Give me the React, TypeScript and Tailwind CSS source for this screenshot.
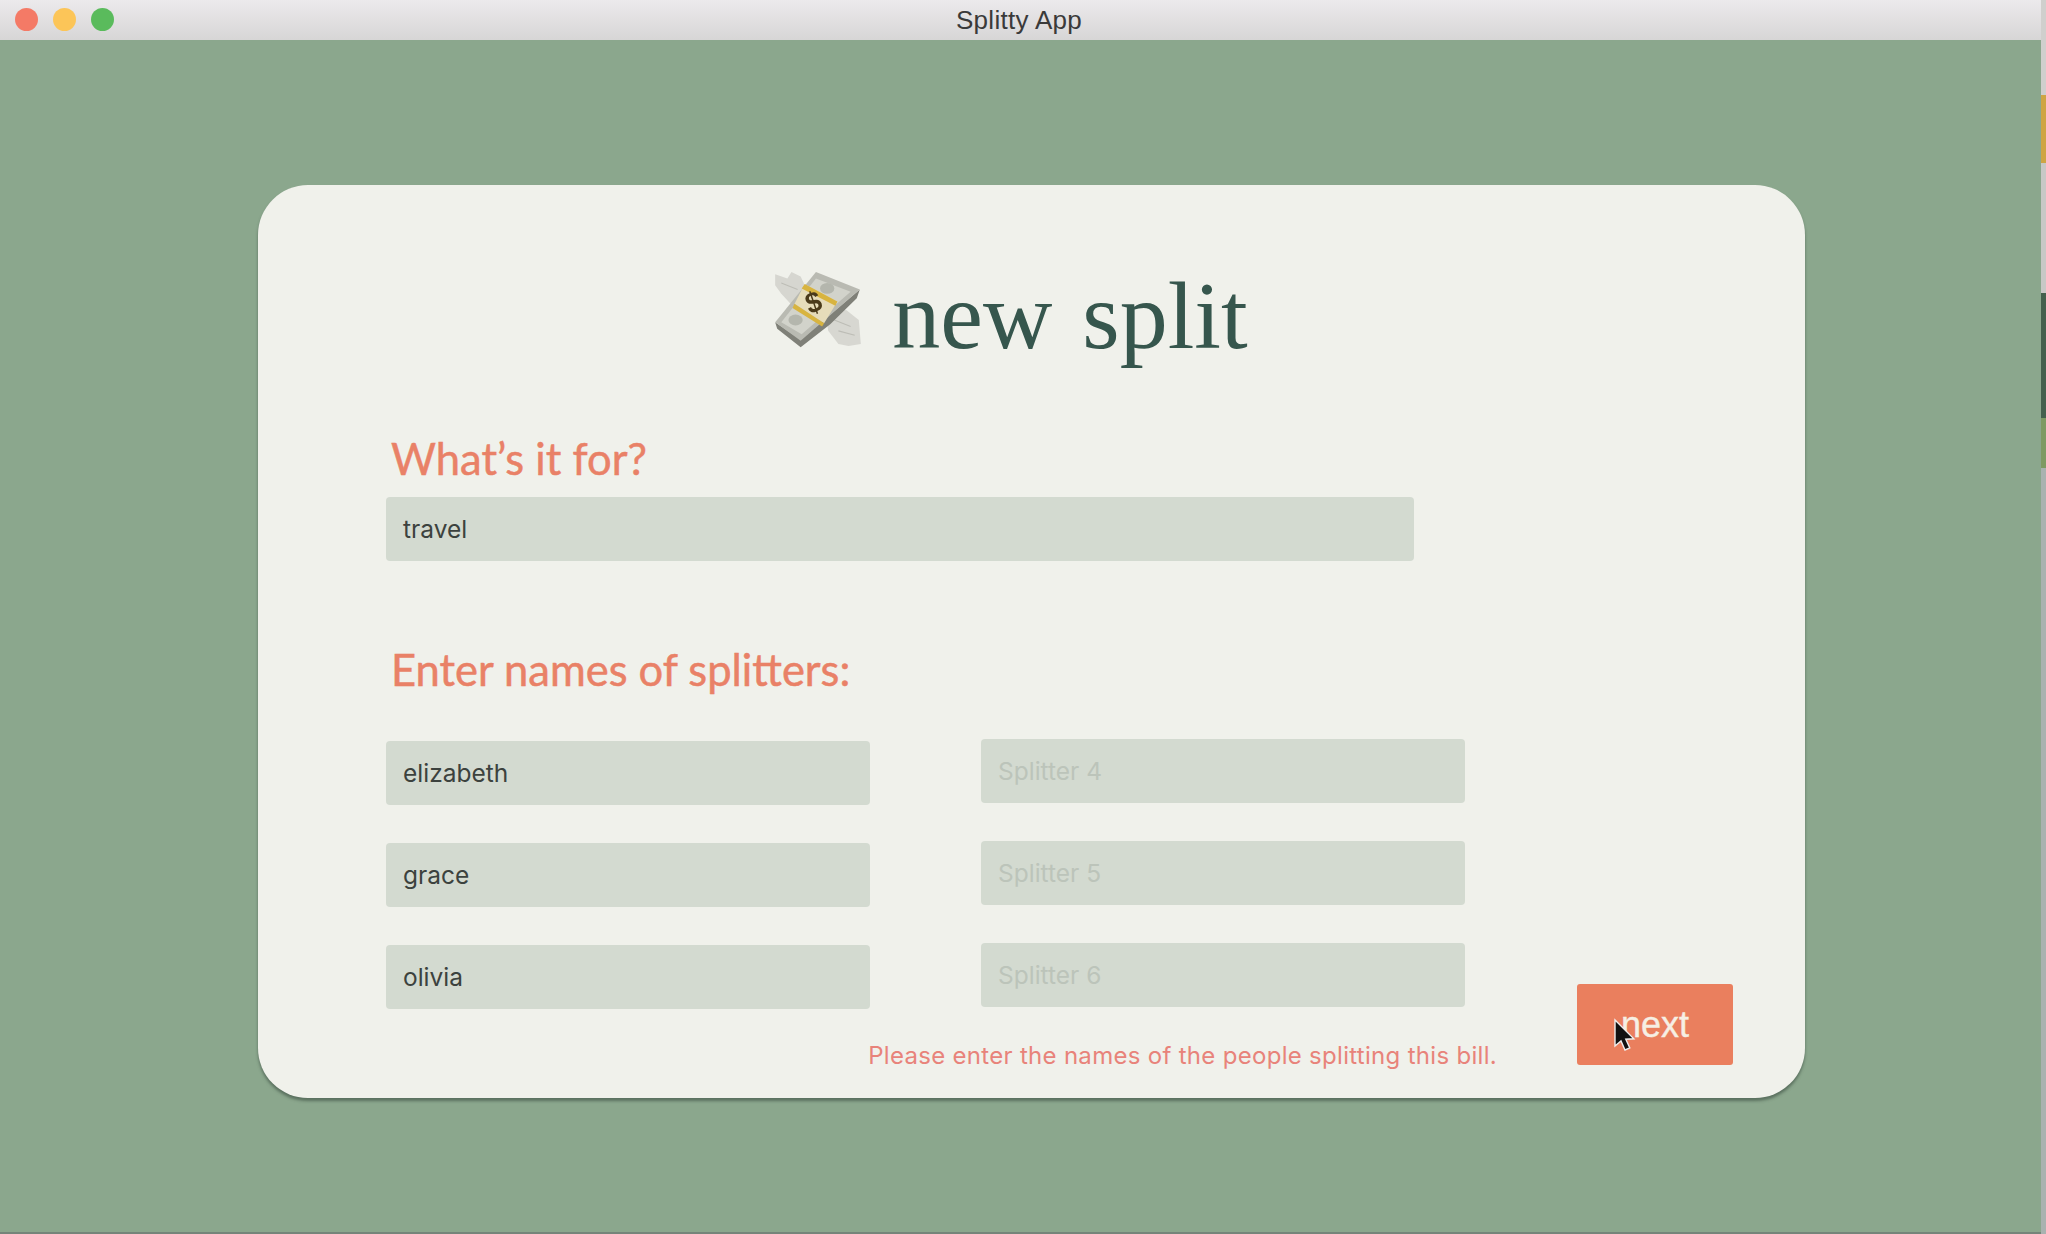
const labelFont = "font-['Lato','Liberation_Sans',sans-serif]"

function MoneyWings() {
  return (
    <svg width="102" height="98" viewBox="0 0 100 90" preserveAspectRatio="none" className="mr-[23px] mt-[-4px] blur-[0.5px]">
      {/* wings */}
      <path d="M8 14 L20 18 L24 12 L33 16 L36 22 L38 32 L24 42 L14 32 L8 24 Z" fill="#d6d6d0" />
      <path d="M58 54 L68 46 L78 47 L90 56 L92 78 L80 80 L70 78 L60 66 Z" fill="#d7d7d1" />
      <path d="M66 56 L82 62 M70 66 L86 70 M14 22 L30 28" stroke="#bdbdb6" strokeWidth="1" />
      {/* stack */}
      <path d="M8 58 L10 64 L33 81 L62 60 L88 36 L91 28 L33 74 Z" fill="#7f8078" />
      <path d="M8 58 L48 12 L91 28 L33 75 Z" fill="#b9bab2" />
      <path d="M14 58 L48 18 L82 30 L34 69 Z" fill="#d2d3cb" />
      <ellipse cx="59" cy="27" rx="7" ry="5" fill="#b4b6ad" />
      <ellipse cx="28" cy="56" rx="7" ry="5" fill="#b4b6ad" />
      {/* band */}
      <path d="M37 23 L69 39 L56 59 L27 41 Z" fill="#e6dcba" />
      <path d="M37 23 L69 39 L67 43 L34 27 Z M27 41 L56 59 L54 62 L25 45 Z" fill="#d8b440" />
      <text
        x="46"
        y="49"
        textAnchor="middle"
        fontSize="27"
        fontWeight="700"
        fill="#4a3a1a"
        fontFamily="Liberation Sans"
        transform="rotate(-20 46 41)"
      >
        $
      </text>
    </svg>
  )
}

function Field({ value, placeholder, full }: { value?: string; placeholder?: string; full?: boolean }) {
  return (
    <div
      className={`h-[64px] ${full ? 'w-[1028px]' : 'w-[484px]'} bg-[#d3dad0] rounded-[4px] pl-[17px] flex items-center text-[24.5px] font-['Inter',sans-serif] ${
        value ? 'text-[#3c423e]' : 'text-[#bcc4ba]'
      }`}
    >
      {value ?? placeholder}
    </div>
  )
}

export default function App() {
  return (
    <div className="w-[2046px] h-[1234px] flex overflow-hidden bg-[#c9c9c6]">
      <div className="w-[2041px] h-full flex flex-col">
        {/* title bar */}
        <div className="h-[40px] shrink-0 relative flex items-center justify-center bg-gradient-to-b from-[#eceaec] to-[#d7d6d6]">
          <div className="absolute left-[15px] top-[8px] flex gap-[15px]">
            <div className="w-[23px] h-[23px] rounded-full bg-[#f47a66]" />
            <div className="w-[23px] h-[23px] rounded-full bg-[#fcc558]" />
            <div className="w-[23px] h-[23px] rounded-full bg-[#5abb5c]" />
          </div>
          <span className="text-[26px] tracking-[0.3px] text-[#3a3a3a] font-['Liberation_Sans',sans-serif] pr-[3px]">Splitty App</span>
        </div>

        {/* main */}
        <div className="flex-1 bg-[#8ba78d] pt-[145px] pl-[258px] border-b-2 border-[#75857a]">
          <div className="w-[1547px] h-[913px] bg-[#f0f1eb] rounded-[50px] shadow-[0_3px_3px_rgba(70,90,75,0.7)]">
            <div className="pt-[78px] h-[247px] flex justify-center items-start pr-[48px]">
              <MoneyWings />
              <h1 className="mt-[-2px] text-[96px] leading-[110px] text-[#36564d] font-['Liberation_Serif',serif] [word-spacing:6px]">
                new split
              </h1>
            </div>

            <div className="pl-[128px]">
              <h2 className={`ml-[5px] h-[52px] leading-[52px] text-[43.5px] text-[#e98167] [-webkit-text-stroke:0.5px_#e98167] ${labelFont}`}>
                What’s it for?
              </h2>
              <div className="mt-[13px]">
                <Field value="travel" full />
              </div>
              <h2 className={`ml-[5px] mt-[82px] h-[52px] leading-[52px] text-[43.5px] text-[#e98167] [-webkit-text-stroke:0.5px_#e98167] ${labelFont}`}>
                Enter names of splitters:
              </h2>

              <div className="flex mt-[44px]">
                <div className="w-[1111px]">
                  <div className="flex gap-[111px] items-start">
                    <div className="flex flex-col gap-[38px] pt-[2px]">
                      <Field value="elizabeth" />
                      <Field value="grace" />
                      <Field value="olivia" />
                    </div>
                    <div className="flex flex-col gap-[38px]">
                      <Field placeholder="Splitter 4" />
                      <Field placeholder="Splitter 5" />
                      <Field placeholder="Splitter 6" />
                    </div>
                  </div>
                  <p className="mt-[31px] h-[32px] leading-[32px] text-right text-[24px] tracking-[0.3px] text-[#e8837a] font-['Inter',sans-serif]">
                    Please enter the names of the people splitting this bill.
                  </p>
                </div>

                <button className="relative self-end ml-[80px] mb-[7px] w-[156px] h-[81px] bg-[#ea7f5e] rounded-[3px] text-[36px] text-[#f6efe4] [-webkit-text-stroke:0.4px_#f6efe4] font-['Liberation_Sans',sans-serif]">
                  next
                  <svg width="24" height="34" viewBox="0 0 12 17" className="absolute left-[36px] top-[34px]">
                    <path d="M1 1 L1 14 L4 11.5 L6 16 L8.4 15 L6.4 10.6 L10.4 10.4 Z" fill="#111" stroke="#eee" strokeWidth="0.7" />
                  </svg>
                </button>
              </div>
            </div>
          </div>
        </div>
      </div>

      {/* desktop showing behind the window */}
      <div className="w-[5px] h-full flex flex-col">
        <div className="h-[95px] bg-[#d0cfcd]" />
        <div className="h-[68px] bg-[#cfa544]" />
        <div className="h-[130px] bg-[#c8c8c6]" />
        <div className="h-[125px] bg-[#44604d]" />
        <div className="h-[50px] bg-[#7f9a63]" />
        <div className="flex-1 bg-[#a9b2b0]" />
      </div>
    </div>
  )
}
